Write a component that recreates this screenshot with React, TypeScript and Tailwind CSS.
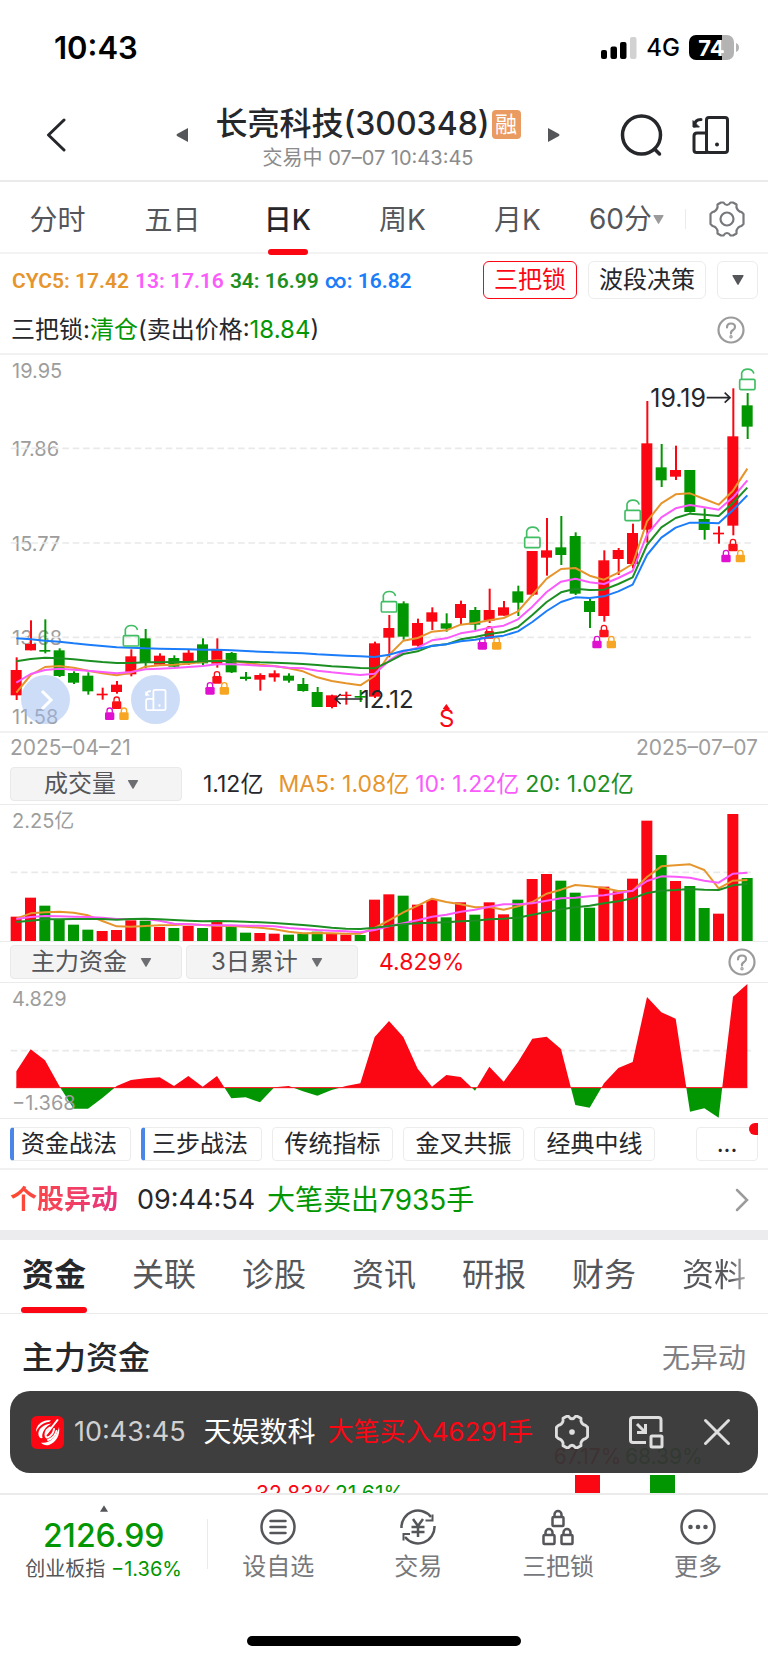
import React, { useState } from 'react';

const RED = '#fb0613';
const GREEN = '#029702';
const ORANGE = '#e6952c';
const PINK = '#fb5bfb';
const DARK_GREEN = '#1c8f22';
const BLUE = '#1b7df9';

// [up, high, body top, body bottom, low] in chart units
const CANDLES: [number, number, number, number, number][] = [
  [1, 922, 960, 1036, 1050], [1, 811, 882, 901, 901], [0, 808, 900, 905, 910], [0, 895, 901, 978, 981],
  [0, 964, 969, 998, 1002], [0, 967, 977, 1024, 1034], [1, 1013, 1031, 1036, 1049], [1, 993, 1004, 1026, 1031],
  [1, 898, 919, 973, 979], [0, 837, 865, 936, 955], [1, 910, 917, 944, 944], [0, 916, 924, 950, 950],
  [1, 900, 908, 934, 945], [0, 865, 883, 940, 945], [1, 865, 897, 941, 953], [0, 906, 909, 967, 969],
  [0, 966, 980, 987, 992], [1, 970, 975, 989, 1022], [1, 961, 970, 982, 995], [0, 970, 977, 992, 998],
  [0, 984, 1002, 1023, 1025], [0, 1011, 1026, 1071, 1071], [1, 1034, 1036, 1071, 1075], [1, 1025, 1034, 1038, 1064],
  [0, 1020, 1038, 1043, 1056], [1, 875, 880, 1040, 1044], [1, 795, 834, 863, 922], [0, 754, 760, 860, 869],
  [1, 806, 819, 887, 890], [1, 772, 787, 815, 840], [0, 790, 820, 836, 845], [1, 752, 762, 804, 822],
  [0, 771, 780, 824, 840], [1, 716, 780, 812, 819], [1, 753, 772, 797, 797], [0, 707, 724, 758, 798],
  [1, 603, 603, 734, 738], [1, 504, 601, 623, 677], [0, 498, 592, 615, 645], [0, 547, 558, 731, 735],
  [0, 747, 753, 786, 834], [1, 601, 631, 798, 815], [1, 594, 600, 627, 675], [1, 521, 549, 642, 655],
  [1, 153, 280, 539, 578], [0, 282, 352, 391, 411], [1, 287, 360, 380, 390], [0, 360, 360, 486, 488],
  [0, 475, 507, 540, 569], [1, 529, 548, 553, 581], [1, 115, 259, 527, 556], [0, 129, 166, 230, 267],
];

const PRICE_LINES = [
  { color: ORANGE, values: [1028, 975, 951, 948, 953, 962, 970, 976, 968, 950, 946, 944, 941, 935, 931, 933, 938, 944, 948, 955, 964, 982, 993, 1000, 1006, 978, 915, 872, 864, 845, 841, 824, 819, 811, 804, 784, 735, 686, 657, 654, 677, 689, 668, 642, 514, 460, 433, 430, 447, 464, 422, 356] },
  { color: PINK, values: [998, 972, 960, 956, 959, 962, 966, 970, 966, 958, 956, 954, 951, 948, 943, 943, 944, 947, 949, 953, 955, 962, 967, 971, 975, 971, 932, 905, 893, 871, 865, 850, 843, 833, 827, 808, 770, 726, 695, 686, 697, 702, 684, 663, 554, 502, 475, 465, 472, 479, 442, 391] },
  { color: DARK_GREEN, values: [934, 927, 923, 925, 928, 932, 936, 939, 939, 937, 937, 936, 936, 934, 933, 933, 935, 937, 938, 940, 942, 945, 949, 951, 954, 955, 935, 912, 904, 887, 883, 868, 861, 852, 846, 831, 795, 756, 727, 716, 720, 719, 702, 682, 585, 532, 504, 491, 494, 498, 459, 413] },
  { color: BLUE, values: [865, 868, 872, 875, 880, 884, 888, 892, 893, 895, 896, 897, 898, 899, 899, 901, 903, 905, 907, 908, 910, 913, 915, 917, 919, 921, 914, 902, 896, 888, 883, 874, 869, 862, 857, 844, 816, 783, 756, 742, 744, 739, 724, 704, 615, 563, 533, 518, 518, 520, 480, 436] },
];

const VOLUMES = [
  501, 444, 468, 511, 525, 540, 544, 541, 512, 513, 532, 535, 529, 535, 516, 531, 549, 550, 552, 555, 552, 546, 553,
  555, 556, 450, 434, 438, 465, 451, 503, 458, 495, 458, 494, 450, 388, 373, 393, 429, 474, 411, 425, 387, 213, 316,
  394, 409, 475, 492, 193, 385,
];

const VOLUME_LINES = [
  { color: ORANGE, values: [507, 491, 488, 486, 489, 497, 514, 530, 531, 529, 527, 526, 524, 526, 528, 529, 531, 534, 539, 546, 551, 550, 551, 552, 552, 535, 512, 488, 468, 447, 457, 464, 473, 472, 480, 470, 457, 432, 420, 406, 410, 415, 424, 423, 382, 350, 347, 344, 361, 416, 393, 391] },
  { color: PINK, values: [508, 502, 499, 500, 501, 502, 504, 508, 508, 508, 513, 522, 524, 526, 527, 527, 528, 528, 530, 535, 538, 541, 543, 545, 548, 541, 530, 521, 512, 501, 495, 486, 480, 471, 464, 464, 461, 453, 446, 444, 440, 437, 430, 423, 394, 380, 381, 384, 393, 399, 372, 369] },
  { color: DARK_GREEN, values: [517, 513, 509, 509, 508, 508, 508, 510, 508, 507, 509, 511, 513, 515, 514, 515, 516, 518, 520, 523, 526, 530, 534, 537, 538, 534, 529, 524, 521, 519, 518, 515, 513, 509, 507, 504, 495, 487, 479, 473, 468, 461, 455, 446, 430, 423, 421, 418, 420, 421, 407, 403] },
];

const FUNDS = [
  394, 328, 361, 438, 506, 506, 474, 438, 420, 415, 412, 438, 408, 440, 408, 475, 472, 487, 442, 438, 454, 467, 450,
  438, 430, 291, 243, 291, 386, 440, 405, 411, 452, 380, 425, 366, 296, 290, 327, 495, 503, 430, 384, 366, 171, 217,
  236, 515, 505, 533, 170, 132,
];
const FUND_ZERO = 443;

const LOCK_GROUPS = [[7, 1039], [14, 963], [33, 828], [41, 824], [50, 566]];
const UNLOCKS = [[8, 820], [26, 718], [36, 525], [43, 444], [51, 51]];

const xAt = (i: number) => 49 + i * 43;
const toPoints = (values: number[]) => values.map((v, i) => `${xAt(i)},${v}`).join(' ');

function Triangle({ className, up = false }: { className: string; up?: boolean }) {
  return (
    <svg className={className} viewBox="0 0 12 10" fill="currentColor" aria-hidden="true">
      <path d={up ? 'M6 0l6 10H0z' : 'M1 0h10q1 0 .5 1L6.600 9.500q-.6.8-1.200 0L.5 1Q0 0 1 0z'} />
    </svg>
  );
}

function GearIcon({ className, thin = false }: { className: string; thin?: boolean }) {
  return (
    <svg className={className} viewBox="0 0 36 36" fill="none" stroke="currentColor" strokeWidth={thin ? 2.2 : 3} strokeLinejoin="round" aria-hidden="true">
      <path d="M12 1.500h2.500q1.500 2.500 3.500 2.500t3.500-2.500H24l3.500 2v3q1.500 4 5 4.500l2 2v10l-2 2q-3.500.5-5 4.500v3l-3.500 2h-2.500q-1.500-2.500-3.500-2.500t-3.500 2.500H12l-3.500-2v-3q-1.500-4-5-4.500l-2-2v-10l2-2q3.500-.5 5-4.500v-3z" />
      {thin ? <circle cx="18" cy="18" r="6.500" /> : <circle cx="18" cy="18" r="1.500" />}
    </svg>
  );
}

function DeviceIcon({ className }: { className: string }) {
  return (
    <svg className={className} viewBox="0 0 38 38" fill="none" stroke="currentColor" strokeWidth="3" strokeLinejoin="round" strokeLinecap="round" aria-hidden="true">
      <rect x="14.500" y="1.500" width="21" height="35" rx="2.500" />
      <path d="M14.500 17H5q-3 0-3 3v14q0 2.500 2.500 2.500h10" />
      <path d="M9 3.500Q2.500 3.500 2.500 10" />
      <path d="M1 5v6h6z" fill="currentColor" strokeWidth="1" />
      <circle cx="25" cy="28.500" r="1" fill="currentColor" strokeWidth="2" />
    </svg>
  );
}

function HelpButton() {
  return (
    <button type="button" aria-label="帮助" className="text-[#9b9b9b]">
      <svg className="h-[28px] w-[28px]" viewBox="0 0 28 28" fill="none" stroke="currentColor" strokeWidth="2.200" aria-hidden="true">
        <circle cx="14" cy="14" r="12.500" />
        <path d="M10 11.500q0-4 4-4t4 3.500q0 2-2.200 3.200T14 17.500" strokeLinecap="round" />
        <circle cx="14" cy="20.800" r="0.600" />
      </svg>
    </button>
  );
}

function IndicatorSelect({ label, value, pad, arrow }: { label: string; value: string; pad: string; arrow: string }) {
  return (
    <span className="relative flex h-[34px] w-[172px] items-center rounded-[4px] border border-[#e9e9e9] bg-[#f4f4f4] text-[#55565a]">
      <select aria-label={label} className={`h-full w-full appearance-none text-[24px] leading-[32px] outline-none ${pad}`}>
        <option>{value}</option>
      </select>
      <Triangle className={`pointer-events-none absolute h-[9px] w-[12px] text-[#6d6e72] ${arrow}`} />
    </span>
  );
}

function ClosedLock({ x, y, color }: { x: number; y: number; color: string }) {
  return (
    <g>
      <path d={`M${x - 8} ${y + 16}v-6a8 8 0 0 1 16 0v6`} fill="none" stroke={color} strokeWidth="4" />
      <rect x={x - 14} y={y + 15} width="28" height="23" rx="4" fill={color} />
    </g>
  );
}

function DashedGrid({ ys }: { ys: number[] }) {
  return (
    <>
      {ys.map((y) => (
        <path key={y} d={`M32 ${y}H2264`} stroke="#e9e9e9" strokeWidth="5" strokeDasharray="20 11" />
      ))}
    </>
  );
}

function Lines({ lines }: { lines: { color: string; values: number[] }[] }) {
  return (
    <>
      {lines.map((l) => (
        <polyline key={l.color} points={toPoints(l.values)} fill="none" stroke={l.color} strokeWidth="6" strokeLinejoin="round" />
      ))}
    </>
  );
}

function PriceChart() {
  return (
    <section className="relative border-y-2 border-[#f1f1f1]" aria-label="日K线">
      <div className="absolute inset-0 text-[20px] leading-[24px] text-[#9d9d9d]">
        <span className="absolute left-3 top-[4px]">19.95</span>
        <span className="absolute left-3 top-[82px]">17.86</span>
        <span className="absolute left-3 top-[177px]">15.77</span>
        <span className="absolute left-3 top-[271px]">13.68</span>
        <span className="absolute bottom-[2px] left-3">11.58</span>
      </div>
      <svg className="relative block w-full" viewBox="0 15 2304 1128" aria-hidden="true">
        <DashedGrid ys={[295, 579, 862]} />
        {CANDLES.map(([up, high, top, bottom, low], i) => (
          <g key={i} fill={up ? RED : GREEN}>
            <rect x={xAt(i) - 2} y={high} width="6" height={low - high} />
            <rect x={xAt(i) - 17} y={top} width="33" height={bottom - top} />
          </g>
        ))}
        {LOCK_GROUPS.map(([i, y]) => (
          <g key={i}>
            <ClosedLock x={xAt(i)} y={y} color="#fb1018" />
            <ClosedLock x={xAt(i) - 21} y={y + 33} color="#e010d0" />
            <ClosedLock x={xAt(i) + 22} y={y + 33} color="#f7a623" />
          </g>
        ))}
        <Lines lines={PRICE_LINES} />
        <g fill="none" stroke="#41bd64" strokeWidth="5">
          {UNLOCKS.map(([i, y]) => (
            <g key={i}>
              <rect x={xAt(i) - 23} y={y + 37} width="46" height="31" rx="4" />
              <path d={`M${xAt(i) - 17} ${y + 36}V${y + 18}a19 17 0 0 1 36 0`} strokeLinecap="round" />
            </g>
          ))}
        </g>
        <g fill="none" stroke="#26272b" strokeWidth="5">
          <path d="M2120 143h68M2174 128l16 15-16 15" />
          <path d="M1088 1047h-80M1022 1032l-16 15 16 15" />
        </g>
        <path d="M1339 1062l11 15h-22z" fill={RED} />
      </svg>
      <span className="absolute right-[62px] top-[28px] text-[25px] leading-[30px] text-[#26272b]">19.19</span>
      <span className="absolute left-[360px] top-[330px] text-[24px] leading-[30px] text-[#26272b]">12.12</span>
      <span className="absolute left-[439px] top-[351px] text-[24px] leading-[26px] text-[#fb0613]">S</span>
      <button type="button" aria-label="展开" className="absolute bottom-[7px] left-[21px] flex h-[49px] w-[49px] items-center justify-center rounded-full bg-[#9dbcf0]/50 text-white">
        <svg className="h-[22px] w-[22px]" viewBox="0 0 22 22" fill="none" stroke="currentColor" strokeWidth="3" aria-hidden="true">
          <path d="M7 2l9 9-9 9" />
        </svg>
      </button>
      <button type="button" aria-label="横屏" className="absolute bottom-[7px] left-[131px] flex h-[49px] w-[49px] items-center justify-center rounded-full bg-[#9dbcf0]/50 text-white">
        <DeviceIcon className="h-[22px] w-[22px]" />
      </button>
    </section>
  );
}

function VolumeChart() {
  return (
    <section className="relative border-y border-[#ebebeb]" aria-label="成交量">
      <span className="absolute left-3 top-[4px] text-[20px] leading-[24px] text-[#9d9d9d]">2.25亿</span>
      <svg className="relative block w-full" viewBox="0 166 2304 408" aria-hidden="true">
        <DashedGrid ys={[368]} />
        {VOLUMES.map((top, i) => (
          <rect key={i} x={xAt(i) - 17} y={top} width="33" height={575 - top} fill={CANDLES[i][0] ? RED : GREEN} />
        ))}
        <Lines lines={VOLUME_LINES} />
      </svg>
    </section>
  );
}

function FundChart() {
  const area = `${xAt(0)},${FUND_ZERO} ${toPoints(FUNDS)} ${xAt(51)},${FUND_ZERO}`;
  return (
    <section className="relative border-y border-[#ebebeb]" aria-label="主力资金">
      <svg className="block w-full" viewBox="0 129 2304 405" aria-hidden="true">
        <clipPath id="inflow">
          <rect x="0" y="100" width="2304" height={FUND_ZERO - 100} />
        </clipPath>
        <clipPath id="outflow">
          <rect x="0" y={FUND_ZERO} width="2304" height="120" />
        </clipPath>
        <DashedGrid ys={[332]} />
        <polygon points={area} fill={RED} clipPath="url(#inflow)" />
        <polygon points={area} fill={GREEN} clipPath="url(#outflow)" />
        <path d={`M${xAt(0)} ${FUND_ZERO}H${xAt(51)}`} stroke={RED} strokeWidth="3" />
      </svg>
      <span className="absolute left-3 top-[4px] text-[20px] leading-[24px] text-[#9d9d9d]">4.829</span>
      <span className="absolute bottom-[3px] left-3 text-[20px] leading-[24px] text-[#9d9d9d]">−1.368</span>
    </section>
  );
}

function StatusBar() {
  return (
    <div className="flex h-[100px] items-center justify-between pb-[5px] pl-[54px] pr-[29px] text-black">
      <span className="text-[31px] font-semibold leading-[36px]">10:43</span>
      <span className="flex items-center gap-[9px]">
        <svg className="h-[22px] w-[36px]" viewBox="0 0 36 22" aria-hidden="true">
          <rect x="0" y="13" width="6" height="9" rx="2" />
          <rect x="9.500" y="9.500" width="6.500" height="12.500" rx="2" />
          <rect x="19" y="5" width="6.500" height="17" rx="2" />
          <rect x="29" y="0" width="6.500" height="22" rx="2" fill="#d2d2d2" />
        </svg>
        <span className="text-[24px] font-medium leading-[28px]">4G</span>
        <span className="relative flex items-center">
          <span className="flex h-[25px] w-[45px] items-center justify-center rounded-[7px] bg-linear-to-r from-black from-[73%] to-[#b3b3b3] to-[73%] text-[22px] font-bold leading-[24px] text-white">
            74
          </span>
          <svg className="ml-[2px] h-[9px] w-[3px]" viewBox="0 0 3 9" aria-hidden="true">
            <path d="M0 0q3 1 3 4.500T0 9z" fill="#b3b3b3" />
          </svg>
        </span>
      </span>
    </div>
  );
}

function Header() {
  return (
    <header className="flex h-[82px] items-center border-b-2 border-[#ebebeb] pb-[10px] pl-[44px] pr-[38px] text-[#26272b]">
      <button type="button" aria-label="返回">
        <svg className="h-[34px] w-[24px]" viewBox="0 0 24 34" fill="none" stroke="currentColor" strokeWidth="3" strokeLinecap="round" strokeLinejoin="round" aria-hidden="true">
          <path d="M20 2L4.500 17 20 32" />
        </svg>
      </button>
      <div className="flex flex-1 items-center justify-center gap-[27px] pl-[48px]">
        <button type="button" aria-label="上一只" className="text-[#55565a]">
          <svg className="h-[14px] w-[12px]" viewBox="0 0 12 14" fill="currentColor" aria-hidden="true">
            <path d="M12 0v14L1 8q-1-1 0-2z" />
          </svg>
        </button>
        <div className="pt-[6px] text-center">
          <h1 className="flex items-center justify-center gap-[2px] text-[32px] font-medium leading-[40px]">
            长亮科技(300348)
            <span className="flex h-[29px] w-[29px] items-center justify-center rounded-[4px] bg-[#ea9b61] text-[22px] font-normal leading-[28px] text-white">融</span>
          </h1>
          <p className="text-[20px] leading-[28px] text-[#8b8b8b]">交易中 07–07 10:43:45</p>
        </div>
        <button type="button" aria-label="下一只" className="text-[#55565a]">
          <svg className="h-[14px] w-[12px]" viewBox="0 0 12 14" fill="currentColor" aria-hidden="true">
            <path d="M0 0v14l11-6q1-1 0-2z" />
          </svg>
        </button>
      </div>
      <div className="flex items-center gap-[28px]">
        <button type="button" aria-label="搜索">
          <svg className="h-[44px] w-[44px]" viewBox="0 0 44 44" fill="none" stroke="currentColor" strokeWidth="3.500" strokeLinecap="round" aria-hidden="true">
            <circle cx="21.500" cy="22" r="19" />
            <path d="M34.500 36l5 5" />
          </svg>
        </button>
        <button type="button" aria-label="横屏">
          <DeviceIcon className="h-[38px] w-[38px]" />
        </button>
      </div>
    </header>
  );
}

const PERIODS = ['分时', '五日', '日K', '周K', '月K'];

function PeriodTabs() {
  const [active, setActive] = useState('日K');
  return (
    <nav className="flex h-[72px] items-stretch border-b-2 border-[#f3f3f3] text-[28px] leading-[40px] text-[#55565a]">
      {PERIODS.map((p) => (
        <button
          key={p}
          type="button"
          onClick={() => setActive(p)}
          className={`relative w-[115px] pt-[6px] ${p === active ? 'font-medium text-[#26272b]' : ''}`}
        >
          {p}
          {p === active && <span className="absolute -bottom-[3px] left-1/2 h-[6px] w-[40px] -translate-x-1/2 rounded-full bg-[#fb0613]" />}
        </button>
      ))}
      <span className="flex flex-1 items-center pl-[14px] pt-[4px]">
        <select aria-label="分钟周期" className="w-[64px] appearance-none outline-none">
          <option>60分</option>
        </select>
        <Triangle className="h-[9px] w-[11px] text-[#9b9b9b]" />
        <span className="ml-[21px] h-[20px] w-px bg-[#ebebeb]" />
        <button type="button" aria-label="设置" className="ml-[23px] text-[#77787c]">
          <GearIcon thin className="h-[36px] w-[36px]" />
        </button>
      </span>
    </nav>
  );
}

function IndicatorHeader() {
  return (
    <>
      <div className="flex h-[52px] items-center pl-3 pr-[10px]">
        <p className="flex flex-1 gap-[6px] pt-[2px] font-['Roboto',sans-serif] text-[21px] font-semibold leading-[28px]">
          <span className="text-[#e6952c]">CYC5: 17.42</span>
          <span className="text-[#fb5bfb]">13: 17.16</span>
          <span className="text-[#1c8f22]">34: 16.99</span>
          <span className="text-[#1b7df9]">∞: 16.82</span>
        </p>
        <div className="flex gap-[11px] text-[24px] leading-[34px] text-[#26272b]">
          <button type="button" className="h-[38px] w-[94px] rounded-[6px] border border-[#fb0613] text-[#fb0613]">三把锁</button>
          <button type="button" className="h-[38px] w-[118px] rounded-[6px] border border-[#ececec]">波段决策</button>
          <button type="button" aria-label="更多指标" className="flex h-[38px] w-[41px] items-center justify-center rounded-[6px] border border-[#ececec] text-[#55565a]">
            <Triangle className="h-[10px] w-[14px]" />
          </button>
        </div>
      </div>
      <div className="flex h-[47px] items-center justify-between pl-[11px] pr-[23px] text-[24px] leading-[32px] text-[#26272b]">
        <p>
          三把锁:<span className="text-[#029702]">清仓</span>(卖出价格:<span className="text-[#029702]">18.84</span>)
        </p>
        <HelpButton />
      </div>
    </>
  );
}

const STRATEGIES = ['资金战法', '三步战法', '传统指标', '金叉共振', '经典中线'];

function StrategyBar() {
  return (
    <div className="flex h-[51px] items-center justify-between border-b-2 border-[#f1f1f1] px-[10px] text-[24px] leading-[32px] text-[#26272b]">
      <div className="flex gap-[10px]">
        {STRATEGIES.map((s, i) => (
          <button key={s} type="button" className={`h-[34px] w-[121px] rounded-[4px] border border-[#ececec] ${i < 2 ? 'border-l-4 border-l-[#4a86e8] pr-[6px]' : ''}`}>
            {s}
          </button>
        ))}
      </div>
      <button type="button" aria-label="更多战法" className="relative h-[34px] w-[62px] rounded-[4px] border border-[#ececec]">
        ...
        <svg className="absolute -right-px -top-[5px] h-[12px] w-[9px]" viewBox="0 0 9 12" aria-hidden="true">
          <path d="M9 0v12H6A6 6 0 0 1 6 0z" fill={RED} />
        </svg>
      </button>
    </div>
  );
}

const DETAIL_TABS = ['资金', '关联', '诊股', '资讯', '研报', '财务', '资料'];

function DetailTabs() {
  const [active, setActive] = useState('资金');
  return (
    <nav className="flex h-[74px] gap-[44px] overflow-hidden border-b border-[#ebebeb] pl-[21px] text-[32px] leading-[44px] text-[#55565a]">
      {DETAIL_TABS.map((t) => (
        <button
          key={t}
          type="button"
          onClick={() => setActive(t)}
          className={`relative w-[66px] shrink-0 whitespace-nowrap pb-[4px] ${t === active ? 'font-bold text-[#26272b]' : ''} ${t === '资料' ? 'bg-linear-to-r from-[#55565a] from-75% to-[#c0c0c0] bg-clip-text text-transparent' : ''}`}
        >
          {t}
          {t === active && <span className="absolute bottom-0 left-0 h-[6px] w-full rounded-full bg-[#fb0613]" />}
        </button>
      ))}
    </nav>
  );
}

function Toast() {
  return (
    <div role="status" className="absolute inset-x-[10px] top-[77px] flex h-[82px] items-center rounded-[20px] bg-[#343434]/95 pl-[21px] pr-[27px]">
      <svg className="h-[33px] w-[33px]" viewBox="0 0 33 33" aria-hidden="true">
        <rect width="33" height="33" rx="6" fill={RED} />
        <path d="M20 4.500C12 3 5 8.500 5 16c2-5 7-9.500 13-10zM20.500 7.500C12 8 6.500 13.500 7.500 19c.5 2.500 2 3.500 4 3-1.500-5 3-11.500 9-14.500z" fill="white" />
        <path d="M28 11c1.500 8-3 15.500-10 18-3 .8-6.500 0-8-2.500 8 1.500 16-5.500 18-15.500z" fill="white" />
        <path d="M26.500 4L15.500 18M19 11.500q-4.500 2.500-4.500 7t4 2q4-3 4.500-7.500M17 24q6.500-2 8.500-9" fill="none" stroke="white" strokeWidth="2" strokeLinecap="round" />
      </svg>
      <span className="ml-[10px] text-[27px] leading-[36px] text-[#d0d0d0]">10:43:45</span>
      <span className="ml-[18px] text-[28px] leading-[36px] text-white">天娱数科</span>
      <span className="ml-[12px] flex-1 whitespace-nowrap text-[26px] leading-[36px] text-[#fb0613]">大笔买入46291手</span>
      <div className="flex items-center gap-[39px] text-[#dedede]">
        <button type="button" aria-label="提醒设置">
          <GearIcon className="h-[34px] w-[34px]" />
        </button>
        <button type="button" aria-label="小窗">
          <svg className="h-[34px] w-[36px]" viewBox="0 0 36 34" fill="none" stroke="currentColor" strokeWidth="3" aria-hidden="true">
            <path d="M33 17V5q0-2.500-2.500-2.500H5Q2.500 2.500 2.500 5v20q0 2.500 2.500 2.500h13" />
            <path d="M9 9l8 8M17.500 9v8.500H9" />
            <rect x="23" y="21" width="11" height="11" rx="1" />
          </svg>
        </button>
        <button type="button" aria-label="关闭">
          <svg className="h-[28px] w-[28px]" viewBox="0 0 28 28" fill="none" stroke="currentColor" strokeWidth="3" strokeLinecap="round" aria-hidden="true">
            <path d="M2.500 2.500l23 23M25.500 2.500l-23 23" />
          </svg>
        </button>
      </div>
    </div>
  );
}

function MainFund() {
  return (
    <section className="relative h-[179px] overflow-hidden">
      <div className="flex h-[88px] items-center justify-between px-[22px]">
        <h2 className="text-[32px] font-medium leading-[44px] text-[#26272b]">主力资金</h2>
        <span className="text-[28px] leading-[40px] text-[#7f7f83]">无异动</span>
      </div>
      <div className="flex items-start pl-[256px] text-[21px] leading-[24px]">
        <div className="grid grid-cols-2 pt-[80px]">
          <span className="w-[79px] text-[#fb0613]">32.83%</span>
          <span className="w-[70px] text-[#029702]">21.61%</span>
        </div>
        <div className="ml-[136px] grid grid-cols-2 justify-items-center gap-y-[6px] pt-[43px]">
          <span className="w-[75px] text-center text-[#fb0613]">67.17%</span>
          <span className="w-[75px] text-center text-[#029702]">68.39%</span>
          <span className="h-[120px] w-[25px] bg-[#fb0613]" />
          <span className="h-[120px] w-[25px] bg-[#029702]" />
        </div>
      </div>
      <Toast />
    </section>
  );
}

const iconProps = {
  className: 'h-[38px] w-[38px]',
  viewBox: '0 0 38 38',
  fill: 'none',
  stroke: 'currentColor',
  strokeWidth: 2.5,
  'aria-hidden': true,
} as const;

const ACTIONS = [
  {
    label: '设自选',
    icon: (
      <svg {...iconProps}>
        <circle cx="19" cy="19" r="16.500" />
        <path d="M11.500 13h15M11.500 19h15M11.500 25h15" strokeLinecap="round" />
      </svg>
    ),
  },
  {
    label: '交易',
    icon: (
      <svg {...iconProps}>
        <path d="M2.500 20A16.500 16.500 0 0 1 32 9M35.500 18A16.500 16.500 0 0 1 6 29" />
        <path d="M33.500 6.500v6h-7M4.500 32.500V26h6.500" fill="none" strokeWidth="2" />
        <path d="M14 11l5 7 5-7M19 18v11M12.500 19h13M12.500 24h13" />
      </svg>
    ),
  },
  {
    label: '三把锁',
    icon: (
      <svg {...iconProps}>
        {[[13.5, 3], [4.5, 21], [22.5, 21]].map(([x, y]) => (
          <g key={x}>
            <rect x={x} y={y + 6} width="11" height="9" rx="1" />
            <path d={`M${x + 2} ${y + 6}V${y + 3.5}a3.500 3.500 0 0 1 7 0V${y + 6}`} />
          </g>
        ))}
      </svg>
    ),
  },
  {
    label: '更多',
    icon: (
      <svg {...iconProps}>
        <circle cx="19" cy="19" r="16.500" />
        <g fill="currentColor" stroke="none">
          <circle cx="11.500" cy="19" r="2.300" />
          <circle cx="19" cy="19" r="2.300" />
          <circle cx="26.500" cy="19" r="2.300" />
        </g>
      </svg>
    ),
  },
];

function BottomBar() {
  return (
    <footer className="flex h-[143px] items-start border-t-2 border-[#ebebeb] text-[#55565a]">
      <button type="button" className="flex w-[27%] flex-col items-center pt-[10px]">
        <Triangle up className="h-[7px] w-[8px]" />
        <strong className="mt-[4px] text-[32px] font-medium leading-[39px] text-[#029702]">2126.99</strong>
        <span className="whitespace-nowrap text-[20px] leading-[28px]">
          创业板指 <span className="text-[#029702]">−1.36%</span>
        </span>
      </button>
      <span className="mt-[24px] h-[50px] w-px bg-[#ebebeb]" />
      <div className="grid flex-1 grid-cols-4">
        {ACTIONS.map(({ label, icon }) => (
          <button key={label} type="button" className="flex flex-col items-center pt-[13px] text-[24px] leading-[32px]">
            {icon}
            <span className="mt-[5px] text-[#77787c]">{label}</span>
          </button>
        ))}
      </div>
    </footer>
  );
}

export default function App() {
  return (
    <div className="w-full bg-white font-[Inter,'Noto_Sans_CJK_SC',sans-serif]">
      <StatusBar />
      <Header />
      <PeriodTabs />
      <IndicatorHeader />
      <PriceChart />
      <div className="flex h-[34px] items-center justify-between px-[10px] pb-[4px] text-[21px] leading-[24px] text-[#9d9d9d]">
        <span>2025–04–21</span>
        <span>2025–07–07</span>
      </div>
      <div className="flex h-[37px] items-start pl-[10px] text-[23px] leading-[34px] text-[#26272b]">
        <IndicatorSelect label="副图指标一" value="成交量" pad="pl-[33px]" arrow="right-[42px]" />
        <span className="ml-[21px]">1.12亿</span>
        <span className="ml-[15px] text-[#e6952c]">MA5: 1.08亿</span>
        <span className="ml-[6px] text-[#fb5bfb]">10: 1.22亿</span>
        <span className="ml-[6px] text-[#1c8f22]">20: 1.02亿</span>
      </div>
      <VolumeChart />
      <div className="flex h-[40px] items-center pl-[10px] pr-[12px] text-[23px] leading-[34px] text-[#fb0613]">
        <IndicatorSelect label="副图指标二" value="主力资金" pad="pl-[20px]" arrow="right-[29px]" />
        <span className="w-[4px]" />
        <IndicatorSelect label="统计周期" value="3日累计" pad="pl-[24px]" arrow="right-[34px]" />
        <span className="ml-[21px] flex-1">4.829%</span>
        <HelpButton />
      </div>
      <FundChart />
      <StrategyBar />
      <a href="#moves" className="flex h-[60px] items-center pl-[10px] pr-[18px] text-[27px] leading-[40px] text-[#26272b]">
        <b className="bg-linear-to-r from-[#ff4a2a] to-[#e8337f] bg-clip-text text-transparent">个股异动</b>
        <span className="ml-[19px]">09:44:54</span>
        <span className="ml-[12px] flex-1 text-[28px] text-[#029702]">大笔卖出7935手</span>
        <svg className="h-[24px] w-[16px] text-[#9b9b9b]" viewBox="0 0 16 24" fill="none" stroke="currentColor" strokeWidth="2.500" strokeLinecap="round" aria-hidden="true">
          <path d="M3 2l10 10L3 22" />
        </svg>
      </a>
      <div className="h-[10px] bg-[#ececee]" />
      <DetailTabs />
      <MainFund />
      <BottomBar />
      <div className="flex justify-center pb-[17px]">
        <span className="h-[10px] w-[274px] rounded-full bg-black" />
      </div>
    </div>
  );
}
